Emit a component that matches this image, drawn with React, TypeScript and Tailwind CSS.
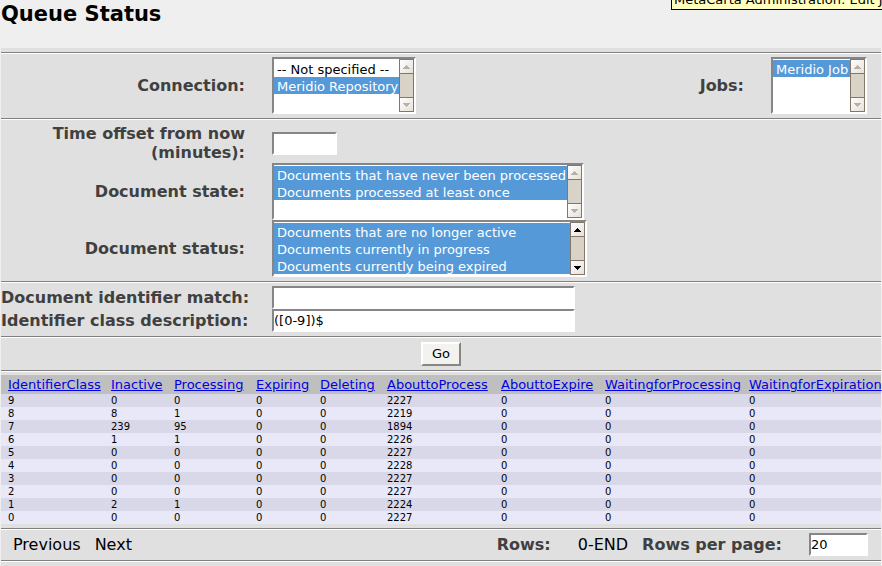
import { useId, type ReactNode } from "react";

const columns = [
  { name: "IdentifierClass", width: "w-[103px]" },
  { name: "Inactive", width: "w-[63px]" },
  { name: "Processing", width: "w-[82px]" },
  { name: "Expiring", width: "w-[64px]" },
  { name: "Deleting", width: "w-[67px]" },
  { name: "AbouttoProcess", width: "w-[114px]" },
  { name: "AbouttoExpire", width: "w-[104px]" },
  { name: "WaitingforProcessing", width: "w-[144px]" },
  { name: "WaitingforExpiration", width: "w-[139px]" },
];

const rows: number[][] = [
  [9, 0, 0, 0, 0, 2227, 0, 0, 0],
  [8, 8, 1, 0, 0, 2219, 0, 0, 0],
  [7, 239, 95, 0, 0, 1894, 0, 0, 0],
  [6, 1, 1, 0, 0, 2226, 0, 0, 0],
  [5, 0, 0, 0, 0, 2227, 0, 0, 0],
  [4, 0, 0, 0, 0, 2228, 0, 0, 0],
  [3, 0, 0, 0, 0, 2227, 0, 0, 0],
  [2, 0, 0, 0, 0, 2227, 0, 0, 0],
  [1, 2, 1, 0, 0, 2224, 0, 0, 0],
  [0, 0, 0, 0, 0, 2227, 0, 0, 0],
];

const inset = "border-2 border-t-[#868686] border-l-[#868686] border-r-white border-b-white bg-white";
const labelText = "text-base leading-[19px] font-bold text-[#404040]";

function Rule() {
  return <hr className="h-[2px] border-t border-b border-t-[#808080] border-b-white" />;
}

function ScrollButton({ up, active }: { up?: boolean; active?: boolean }) {
  return (
    <button
      type="button"
      disabled={!active}
      aria-label={up ? "Scroll up" : "Scroll down"}
      className="flex h-[15px] w-full items-center justify-center border border-[#857768] bg-linear-to-br from-white to-[#e6e0d8]"
    >
      <svg width="7" height="4" viewBox="0 0 7 4" shapeRendering="crispEdges" className={active ? "fill-black" : "fill-[#b5b1a9]"}>
        <path d={up ? "M3 0h1v1h1v1h1v1h1v1H0V3h1V2h1V1h1z" : "M0 0h7v1H6v1H5v1H4v1H3V3H2V2H1V1H0z"} />
      </svg>
    </button>
  );
}

interface ListBoxProps {
  id: string;
  options: string[];
  selected: string[];
  width: string;
  scrollable?: boolean;
}

function ListBox({ id, options, selected, width, scrollable }: ListBoxProps) {
  return (
    <div className={`flex h-[57px] shrink-0 ${inset} ${width}`}>
      <select
        id={id}
        multiple
        size={3}
        defaultValue={selected}
        className="mt-px h-[52px] min-w-0 flex-1 appearance-none overflow-hidden bg-white text-[13px] text-black outline-none [scrollbar-width:none]"
      >
        {options.map((option) => (
          <option
            key={option}
            className="h-[17px] min-h-0 p-0 pt-[2px] pl-[3px] leading-[15px] checked:bg-[#5599d8] checked:bg-linear-to-r checked:from-[#5599d8] checked:to-[#5599d8] checked:text-white checked:[-webkit-text-fill-color:white]"
          >
            {option}
          </option>
        ))}
      </select>
      <div className="flex w-[15px] flex-col">
        <ScrollButton up active={scrollable} />
        <div className="flex-1 border-x border-[#857768] bg-[#d9d2c7]" />
        <ScrollButton active={scrollable} />
      </div>
    </div>
  );
}

function Field({ label, children }: { label: string; children: (id: string) => ReactNode }) {
  const id = useId();
  return (
    <div className="flex items-center gap-[27px]">
      <label htmlFor={id} className={`w-[244px] shrink-0 text-right whitespace-pre ${labelText}`}>
        {label}
      </label>
      {children(id)}
    </div>
  );
}

export default function App() {
  return (
    <div className="relative overflow-hidden bg-[#efefef] px-px pb-px font-['DejaVu_Sans',sans-serif] text-black">
      <div
        role="tooltip"
        className="absolute -top-2 left-[671px] h-[18px] border border-black bg-[#ffffbf] px-[2px] text-[13px] leading-[13px] whitespace-nowrap"
      >
        MetaCarta Administration: Edit Job
      </div>

      <h1 className="h-12 pt-[2px] text-[21px] leading-6 font-bold">Queue Status</h1>

      <main className="bg-[#e0e0e0] py-1">
        <form onSubmit={(event) => event.preventDefault()}>
          <Rule />
          <div className="flex items-center justify-between pt-[3px] pr-[14px] pb-1">
            <Field label="Connection:">
              {(id) => (
                <ListBox
                  id={id}
                  width="w-[144px]"
                  options={["-- Not specified --", "Meridio Repository"]}
                  selected={["Meridio Repository"]}
                />
              )}
            </Field>
            <div className="flex items-center gap-[27px]">
              <label htmlFor="jobs" className={labelText}>
                Jobs:
              </label>
              <ListBox id="jobs" width="w-[96px]" options={["Meridio Job"]} selected={["Meridio Job"]} />
            </div>
          </div>
          <Rule />
          <div className="pt-1 pb-1">
            <div className="pb-px">
              <Field label={"Time offset from now\n(minutes):"}>
                {(id) => <input id={id} type="text" className={`h-[23px] w-[65px] text-[13px] ${inset}`} />}
              </Field>
            </div>
            <Field label="Document state:">
              {(id) => (
                <ListBox
                  id={id}
                  width="w-[312px]"
                  options={["Documents that have never been processed", "Documents processed at least once"]}
                  selected={["Documents that have never been processed", "Documents processed at least once"]}
                />
              )}
            </Field>
            <Field label="Document status:">
              {(id) => (
                <ListBox
                  id={id}
                  width="w-[315px]"
                  scrollable
                  options={[
                    "Documents that are no longer active",
                    "Documents currently in progress",
                    "Documents currently being expired",
                  ]}
                  selected={[
                    "Documents that are no longer active",
                    "Documents currently in progress",
                    "Documents currently being expired",
                  ]}
                />
              )}
            </Field>
          </div>
          <Rule />
          <div className="pt-[3px] pb-1">
            <Field label="Document identifier match:">
              {(id) => <input id={id} type="text" className={`h-[23px] w-[303px] text-[13px] ${inset}`} />}
            </Field>
            <Field label="Identifier class description:">
              {(id) => (
                <input id={id} type="text" defaultValue="([0-9])$" className={`h-[23px] w-[303px] text-[13px] ${inset}`} />
              )}
            </Field>
          </div>
          <Rule />
          <div className="flex justify-center py-1">
            <button
              type="submit"
              className="h-6 w-10 border-2 border-t-white border-r-[#868686] border-b-[#868686] border-l-white bg-[#f4f2ee] text-[13px] leading-5"
            >
              Go
            </button>
          </div>
          <Rule />
        </form>

        <table className="mt-[3px] mb-1 w-full table-fixed text-left">
          <thead>
            <tr className="h-[19px] bg-[#bfbfbf]">
              {columns.map((column) => (
                <th key={column.name} className={`pl-[7px] text-[13px] leading-[19px] font-normal ${column.width}`}>
                  <a href="#" className="text-[#0000e6] underline">
                    {column.name}
                  </a>
                </th>
              ))}
            </tr>
          </thead>
          <tbody>
            {rows.map((row) => (
              <tr key={row[0]} className="odd:bg-[#d8d8e8] even:bg-[#e8e8f8]">
                {row.map((value, index) => (
                  <td key={columns[index].name} className="pl-[7px] text-[10px] leading-[13px]">
                    {value}
                  </td>
                ))}
              </tr>
            ))}
          </tbody>
        </table>

        <Rule />
        <div className="flex items-center pt-[3px] pr-[13px] pb-1 pl-3 text-base leading-[23px]">
          <span>Previous</span>
          <span className="ml-[14px]">Next</span>
          <span className={`ml-auto ${labelText}`}>Rows:</span>
          <span className="ml-[27px]">0-END</span>
          <label htmlFor="rows-per-page" className={`ml-[14px] ${labelText}`}>
            Rows per page:
          </label>
          <input
            id="rows-per-page"
            type="text"
            defaultValue="20"
            className={`ml-[27px] h-[23px] w-[59px] text-[13px] ${inset}`}
          />
        </div>
        <Rule />
      </main>
    </div>
  );
}
